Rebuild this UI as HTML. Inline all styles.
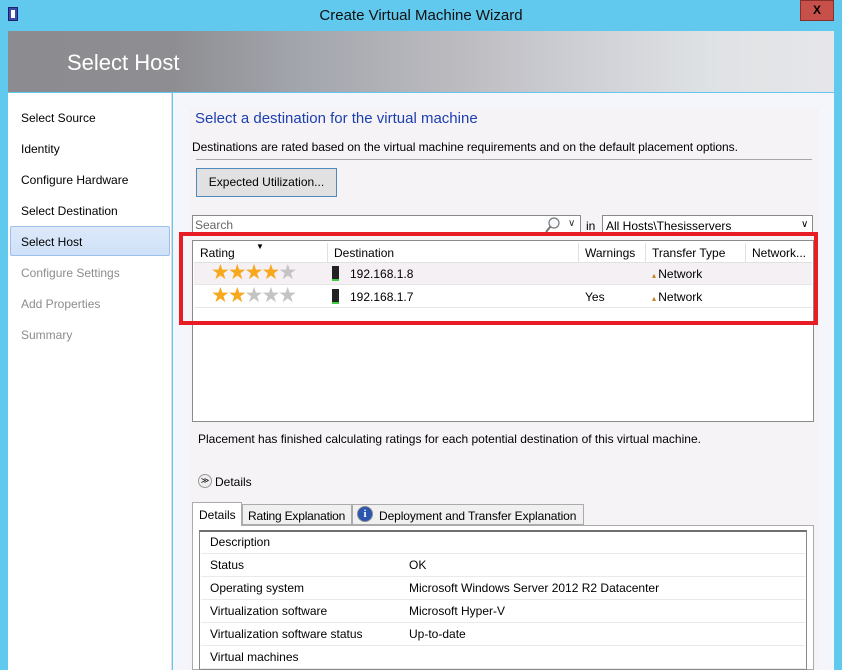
<!DOCTYPE html>
<html><head><style>
*{margin:0;padding:0;box-sizing:border-box}
body{width:842px;height:670px;overflow:hidden;background:#62c9ee;font-family:"Liberation Sans",sans-serif;font-size:12px;color:#000;position:relative}
.abs{position:absolute}
.t{white-space:nowrap}
.st{font-size:21px;letter-spacing:-2px;line-height:20px}
</style></head><body>
<div class="abs" style="left:8px;top:7px;width:10px;height:14px;background:#3a4aa8;border:1px solid #1a2270"></div>
<div class="abs" style="left:11px;top:10px;width:4px;height:8px;background:#fff"></div>
<div class="abs t" style="left:0;width:842px;top:7px;text-align:center;font-size:15px;color:#111">Create Virtual Machine Wizard</div>
<div class="abs" style="left:800px;top:0;width:34px;height:21px;background:#c7504a;border:1px solid #8a2e2a;color:#000;font-weight:bold;font-size:12px;text-align:center;line-height:18px">X</div>
<div class="abs" style="left:8px;top:31px;width:826px;height:61px;background:linear-gradient(90deg,#8c8c90 0%,#8e8e92 20%,#a3a5ad 35%,#bcbcc0 55%,#cfd0d6 70%,#dfe2e4 85%,#e6e6ea 100%)"></div>
<div class="abs t" style="left:67px;top:50px;font-size:22px;color:#fff">Select Host</div>
<div class="abs" style="left:8px;top:93px;width:164px;height:577px;background:#fff;border-right:1px solid #dcdce4"></div>
<div class="abs" style="left:173px;top:93px;width:661px;height:577px;background:#f5f5fc"></div>
<div class="abs" style="left:189px;top:108px;width:630px;height:562px;background:#f6f3f6"></div>
<div class="abs" style="left:10px;top:226px;width:160px;height:30px;background:linear-gradient(#dde9fa,#cfe1f8);border:1px solid #9cc0ea;border-radius:2px"></div>
<div class="abs t" style="left:21px;top:111px">Select Source</div>
<div class="abs t" style="left:21px;top:142px">Identity</div>
<div class="abs t" style="left:21px;top:173px">Configure Hardware</div>
<div class="abs t" style="left:21px;top:204px">Select Destination</div>
<div class="abs t" style="left:21px;top:235px">Select Host</div>
<div class="abs t" style="left:21px;top:266px;color:#8c8c8c">Configure Settings</div>
<div class="abs t" style="left:21px;top:297px;color:#8c8c8c">Add Properties</div>
<div class="abs t" style="left:21px;top:328px;color:#8c8c8c">Summary</div>
<div class="abs t" style="left:195px;top:110px;font-size:15px;color:#1c3fb0">Select a destination for the virtual machine</div>
<div class="abs t" style="left:192px;top:140px;font-size:12px;letter-spacing:-0.05px">Destinations are rated based on the virtual machine requirements and on the default placement options.</div>
<div class="abs" style="left:196px;top:159px;width:616px;height:1px;background:#a8a8a8"></div>
<div class="abs t" style="left:196px;top:168px;width:141px;height:29px;background:#e1e1e1;border:1px solid #4e89c0;text-align:center;line-height:27px">Expected Utilization...</div>
<div class="abs" style="left:192px;top:215px;width:389px;height:20px;background:#fff;border:1px solid #8a8a8a"></div>
<div class="abs t" style="left:195px;top:218px;color:#666">Search</div>
<svg class="abs" style="left:545px;top:216px" width="16" height="18"><circle cx="9" cy="7" r="5" fill="#f4f8fc" stroke="#777" stroke-width="1.2"/><line x1="5.5" y1="10.5" x2="1" y2="16" stroke="#777" stroke-width="2"/></svg>
<div class="abs t" style="left:568px;top:218px;font-size:10px;color:#333">∨</div>
<div class="abs t" style="left:586px;top:219px">in</div>
<div class="abs" style="left:602px;top:215px;width:211px;height:20px;background:#fff;border:1px solid #8a8a8a"></div>
<div class="abs t" style="left:606px;top:219px">All Hosts\Thesisservers</div>
<div class="abs t" style="left:801px;top:219px;font-size:10px">∨</div>
<div class="abs" style="left:192px;top:240px;width:622px;height:182px;background:#fff;border:1px solid #8a8a8a"></div>
<div class="abs" style="left:194px;top:242px;width:618px;height:21px;border-bottom:1px solid #e0e0e0"></div>
<div class="abs" style="left:327px;top:243px;width:1px;height:19px;background:#e0e0e0"></div>
<div class="abs" style="left:578px;top:243px;width:1px;height:19px;background:#e0e0e0"></div>
<div class="abs" style="left:645px;top:243px;width:1px;height:19px;background:#e0e0e0"></div>
<div class="abs" style="left:745px;top:243px;width:1px;height:19px;background:#e0e0e0"></div>
<div class="abs t" style="left:200px;top:246px">Rating</div>
<div class="abs t" style="left:256px;top:242px;font-size:8px">▼</div>
<div class="abs t" style="left:334px;top:246px">Destination</div>
<div class="abs t" style="left:585px;top:246px">Warnings</div>
<div class="abs t" style="left:652px;top:246px">Transfer Type</div>
<div class="abs t" style="left:752px;top:246px">Network...</div>
<div class="abs" style="left:194px;top:263px;width:618px;height:22px;background:#f4f0f4;border-bottom:1px solid #e6e6e6"></div>
<div class="abs" style="left:194px;top:286px;width:618px;height:22px;border-bottom:1px solid #e6e6e6"></div>
<div class="abs t st" style="left:211px;top:263px;color:#f7a81e">★★★★<span style="color:#c4c4c4">★</span></div>
<div class="abs t st" style="left:211px;top:286px;color:#f7a81e">★★<span style="color:#c4c4c4">★★★</span></div>
<div class="abs" style="left:332px;top:266px;width:7px;height:15px;background:#222;border-bottom:2px solid #4c4"></div>
<div class="abs" style="left:332px;top:289px;width:7px;height:15px;background:#222;border-bottom:2px solid #4c4"></div>
<div class="abs t" style="left:350px;top:267px">192.168.1.8</div>
<div class="abs t" style="left:350px;top:290px">192.168.1.7</div>
<div class="abs t" style="left:585px;top:290px">Yes</div>
<div class="abs t" style="left:652px;top:267px"><span style="font-size:8px;color:#c08020">▴ </span>Network</div>
<div class="abs t" style="left:652px;top:290px"><span style="font-size:8px;color:#c08020">▴ </span>Network</div>
<div class="abs" style="left:179px;top:232px;width:639px;height:93px;border:4px solid #e81c24"></div>
<div class="abs t" style="left:198px;top:432px">Placement has finished calculating ratings for each potential destination of this virtual machine.</div>
<div class="abs" style="left:198px;top:474px;width:14px;height:14px;border:1px solid #999;border-radius:50%;background:#eee;font-size:8px;text-align:center;line-height:12px">≫</div>
<div class="abs t" style="left:215px;top:475px">Details</div>
<div class="abs" style="left:192px;top:525px;width:622px;height:145px;background:#fff;border:1px solid #ababab"></div>
<div class="abs t" style="left:192px;top:502px;width:50px;height:24px;background:#fff;border:1px solid #ababab;border-bottom:none;padding:5px 0 0 6px">Details</div>
<div class="abs t" style="left:242px;top:504px;width:110px;height:21px;background:#f0f0f0;border:1px solid #ababab;padding:4px 0 0 5px;letter-spacing:-0.2px">Rating Explanation</div>
<div class="abs t" style="left:352px;top:504px;width:232px;height:21px;background:#f0f0f0;border:1px solid #ababab;padding:4px 0 0 26px;letter-spacing:-0.1px">Deployment and Transfer Explanation</div>
<div class="abs" style="left:357px;top:506px;width:16px;height:16px;border-radius:50%;background:#2a55b0;border:1px solid #888;color:#fff;font-weight:bold;font-size:11px;text-align:center;line-height:14px;font-family:'Liberation Serif',serif">i</div>
<div class="abs" style="left:199px;top:530px;width:608px;height:140px;background:#fff;border:1px solid #888;border-top:2px solid #707070"></div>
<div class="abs t" style="left:210px;top:535px">Description</div>
<div class="abs" style="left:201px;top:553px;width:604px;height:1px;background:#eaeaea"></div>
<div class="abs t" style="left:210px;top:558px">Status</div><div class="abs t" style="left:409px;top:558px">OK</div>
<div class="abs" style="left:201px;top:576px;width:604px;height:1px;background:#eaeaea"></div>
<div class="abs t" style="left:210px;top:581px">Operating system</div><div class="abs t" style="left:409px;top:581px">Microsoft Windows Server 2012 R2 Datacenter</div>
<div class="abs" style="left:201px;top:599px;width:604px;height:1px;background:#eaeaea"></div>
<div class="abs t" style="left:210px;top:604px">Virtualization software</div><div class="abs t" style="left:409px;top:604px">Microsoft Hyper-V</div>
<div class="abs" style="left:201px;top:622px;width:604px;height:1px;background:#eaeaea"></div>
<div class="abs t" style="left:210px;top:627px">Virtualization software status</div><div class="abs t" style="left:409px;top:627px">Up-to-date</div>
<div class="abs" style="left:201px;top:645px;width:604px;height:1px;background:#eaeaea"></div>
<div class="abs t" style="left:210px;top:650px">Virtual machines</div>
<div class="abs" style="left:201px;top:668px;width:604px;height:1px;background:#eaeaea"></div>
</body></html>
